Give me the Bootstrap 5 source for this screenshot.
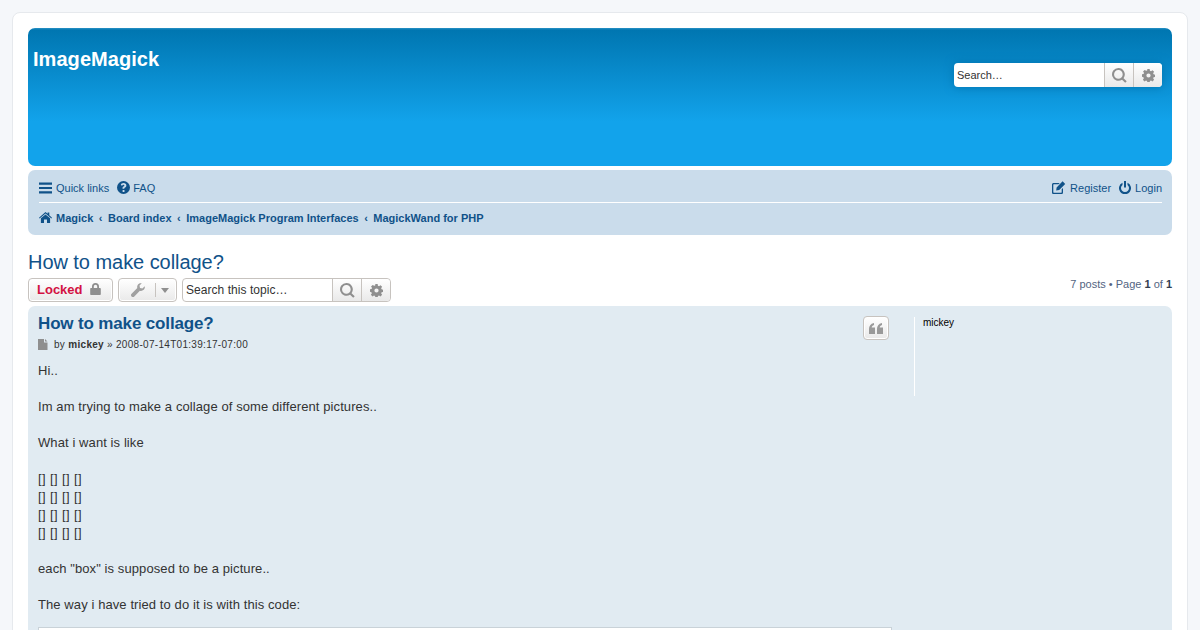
<!DOCTYPE html>
<html lang="en"><head><meta charset="utf-8"><title>How to make collage?</title>
<link href="https://cdn.jsdelivr.net/npm/bootstrap@5.3.0/dist/css/bootstrap.min.css" rel="stylesheet">
<style>
html,body{height:630px;overflow:hidden;background:#f5f7fa}
body{font-family:"Liberation Sans",Arial,sans-serif;font-size:11px;color:#536482;line-height:normal;padding:12px 12px 0}
svg{fill:currentColor;display:block;flex:none}
a{text-decoration:none;color:#105289}
.pg-wrap{background:#fff;border:1px solid #e6e9ed;border-radius:8px;padding:15px;height:700px}
.hdr-bar{height:138px;border-radius:7px;background:linear-gradient(to bottom,#2a93c6 0,#0076b1 2px,#12a3eb 68%,#12a3eb 100%);padding:5px;color:#fff}
.site-name{font-size:20px;font-weight:700;line-height:23px;margin-top:15px;letter-spacing:.05px}
.hdr-search{width:208px;height:24px;margin:30px 5px 0 0;background:#fff;border-radius:4px;box-shadow:0 0 10px #0075b0}
.hdr-search .sbox-input{flex:1;font-size:11px;color:#333;padding-left:3px;line-height:24px}
.sbox-btn{width:29px;display:flex;align-items:center;justify-content:center;color:#8f8f8f;background:linear-gradient(#fff,#e9e9e9);border-left:1px solid #c7c3bf}
.sbox-btn:last-child{border-radius:0 4px 4px 0}
.nav-panel{margin-top:4px;height:65px;background:#cadceb;border-radius:7px;padding:3px 10px;color:#105289}
.nav-row{height:29px;padding-top:0}
.nav-row+.nav-row{border-top:1px solid #fff;padding-top:0;height:30px}
.nav-item-x{display:flex;align-items:center;gap:4px;font-size:11px;line-height:14px}
.nav-lead{margin-left:1px}
.faq-link{gap:3px}
.crumb{font-weight:700}
.crumb-sep{color:#105289;font-weight:700;padding:0 5.5px;font-size:11px}
.topic-title{font-size:20px;line-height:24px;color:#105289;margin:15px 0 4px;font-weight:400;letter-spacing:-.05px}
.tb-btn{height:24px;border:1px solid #c7c3bf;border-radius:4px;background:linear-gradient(#fff,#e9e9e9);box-shadow:0 0 0 1px #fff inset;color:#8f8f8f;display:flex;align-items:center}
.locked{width:85px;padding-left:8px;gap:7px;color:#d31141;font-size:13px;font-weight:700;line-height:21px;padding-bottom:2px}
.locked svg{color:#8f8f8f}
.tools{width:59px;margin-left:5px;padding-left:12px}
.tools svg{color:#a0a0a0}
.tools i{display:block;width:1px;height:14px;background:#c7c3bf;margin:0 5px 0 10px}
.caret-x{width:0;height:0;border:4.5px solid transparent;border-top:5px solid #8f8f8f;border-bottom:0}
.topic-search{width:209px;height:24px;margin-left:5px;background:#fff;border:1px solid #c7c3bf;border-radius:4px}
.topic-search .sbox-input{flex:1;color:#333;font-size:12px;line-height:22px;padding-left:3px;letter-spacing:.05px}
.pager{color:#536482;font-size:11px;line-height:13px}
.pager b{color:#323d4f}
.post-box{margin-top:4px;background:#e1ebf2;border-radius:7px;height:400px;padding:6px 10px 5px;position:relative}
.post-main{width:854px;color:#333;position:relative}
.post-title{font-size:17px;line-height:24px;font-weight:700;color:#105289;margin:0;letter-spacing:-.15px}
.post-meta{font-size:10px;letter-spacing:.3px;color:#333;margin-top:1px;height:15px;gap:6px;line-height:13px}
.post-meta svg{color:#8f8f8f}
.post-text{font-size:13px;line-height:18px;margin-top:10px;color:#333;letter-spacing:.09px}
.box-row{letter-spacing:.38px}
.quote-btn{position:absolute;top:4px;right:3px;width:26px;height:24px;justify-content:center}
.quote-btn svg{color:#999}
.post-side{position:absolute;left:886px;top:11px;height:79px;border-left:1px solid #fff;padding-left:8px;font-size:10px;color:#000;line-height:11px}
.code-frame{height:40px;margin-top:13px;background:#fff;border:1px solid #c9d2d8}
</style></head><body>
<div class="pg-wrap">
 <div class="hdr-bar d-flex justify-content-between align-items-start">
  <div class="site-name">ImageMagick</div>
  <div class="hdr-search d-flex overflow-visible">
   <div class="sbox-input">Search…</div>
   <div class="sbox-btn"><svg width="15" height="15" viewBox="0 0 16 16"><path fill-rule="evenodd" d="M6.800 0a6.800 6.800 0 0 1 5.500 10.800l3.400 3.400-1.600 1.600-3.400-3.400A6.800 6.800 0 1 1 6.800 0zm0 2.200a4.600 4.600 0 1 0 0 9.200 4.600 4.600 0 0 0 0-9.200z"/></svg></div>
   <div class="sbox-btn"><svg width="13" height="13" viewBox="0 0 16 16"><path fill-rule="evenodd" d="M6.600 0h2.800l.4 2.100 1.300.6 1.800-1.200 2 2-1.200 1.800.6 1.300 2.100.4v2.800l-2.100.4-.6 1.300 1.200 1.800-2 2-1.800-1.200-1.300.6-.4 2.100H6.600l-.4-2.100-1.300-.6-1.800 1.200-2-2 1.200-1.800-.6-1.300L-.2 9.400V6.600l2.100-.4.6-1.300L1.300 3.100l2-2 1.800 1.200 1.300-.6zM8 5.400a2.600 2.600 0 1 0 0 5.200 2.600 2.600 0 0 0 0-5.200z"/></svg></div>
  </div>
 </div>
 <div class="nav-panel">
  <div class="nav-row d-flex justify-content-between align-items-center">
   <div class="d-flex gap-2 nav-lead">
    <a class="nav-item-x" href="#"><svg width="13" height="12" viewBox="0 0 13 12"><path d="M0 .5h13v2.200H0zM0 4.900h13v2.200H0zM0 9.300h13v2.200H0z"/></svg>Quick links</a>
    <a class="nav-item-x faq-link" href="#"><svg width="13" height="13" viewBox="0 0 16 16"><path fill-rule="evenodd" d="M8 0a8 8 0 1 1 0 16A8 8 0 0 1 8 0zM6.900 11.200v2.300h2.300v-2.300zM8.100 2.600c-1.900 0-3 .9-3.400 2.200l1.600.9c.3-.7.8-1.100 1.600-1.100.7 0 1.200.4 1.200.9 0 .6-.4.9-1.100 1.300-.9.5-1.200 1.100-1.200 2v.7h2.200v-.4c0-.4.2-.6.9-1 1-.6 1.600-1.300 1.600-2.600 0-1.800-1.500-2.900-3.400-2.900z"/></svg>FAQ</a>
   </div>
   <div class="d-flex gap-2">
    <a class="nav-item-x" href="#"><svg width="14" height="13" viewBox="0 0 14 13"><path d="M10.600.3l2.600 2.600-6 6-3 .5.4-3zM1.600 2h6.200L6.400 3.300H1.800c-.3 0-.5.2-.5.5v7.400c0 .3.2.5.5.5h7.400c.3 0 .5-.2.5-.5V8.300L11 7v4.400c0 .9-.7 1.600-1.600 1.600H1.600C.7 13 0 12.300 0 11.400V3.600C0 2.700.7 2 1.600 2z"/></svg>Register</a>
    <a class="nav-item-x" href="#"><svg width="12" height="13" viewBox="0 0 12 13"><path d="M5 0h2v6.500H5zM3.500 1.800v2.100a4 4 0 1 0 5 0V1.800a6 6 0 1 1-5 0z"/></svg>Login</a>
   </div>
  </div>
  <div class="nav-row d-flex align-items-center nav-lead">
   <a class="nav-item-x crumb" href="#"><svg width="13" height="11" viewBox="0 0 13 11"><path d="M6.500 0l2.100 1.800V.6h1.700v2.700l2.700 2.400-.6.700-5.900-5-5.900 5-.6-.7zM6.500 2.400l4.600 3.900V11H8V7.500H5V11H1.900V6.300z"/></svg>Magick</a>
   <span class="crumb-sep">‹</span><a class="crumb" href="#">Board index</a>
   <span class="crumb-sep">‹</span><a class="crumb" href="#">ImageMagick Program Interfaces</a>
   <span class="crumb-sep">‹</span><a class="crumb" href="#">MagickWand for PHP</a>
  </div>
 </div>
 <h2 class="topic-title">How to make collage?</h2>
 <div class="d-flex justify-content-between align-items-start">
  <div class="d-flex">
   <div class="tb-btn locked">Locked<svg width="11" height="12" viewBox="0 0 11 12"><path fill-rule="evenodd" d="M5.500 0A3.500 3.500 0 0 1 9 3.500V5h.800c.6 0 1 .4 1 1v5c0 .6-.4 1-1 1H1.200c-.6 0-1-.4-1-1V6c0-.6.4-1 1-1H2V3.500A3.500 3.500 0 0 1 5.500 0zm0 1.800A1.700 1.700 0 0 0 3.800 3.500V5h3.400V3.500a1.700 1.700 0 0 0-1.700-1.700z"/></svg></div>
   <div class="tb-btn tools"><svg width="14" height="14" viewBox="0 0 14 14"><path d="M13.700 3.200c.4 1.500-.1 3-1.300 3.900-1 .8-2.300 1-3.500.6L3.300 13.400a1.900 1.900 0 0 1-2.700-2.700l5.700-5.700C5.900 3.800 6.200 2.500 7 1.500 7.900.4 9.400-.1 10.800.3L8.500 2.600l.5 2.400 2.400.5z"/></svg><i></i><span class="caret-x"></span></div>
   <div class="topic-search d-flex">
    <div class="sbox-input">Search this topic…</div>
    <div class="sbox-btn"><svg width="15" height="15" viewBox="0 0 16 16"><path fill-rule="evenodd" d="M6.800 0a6.800 6.800 0 0 1 5.500 10.800l3.400 3.400-1.600 1.600-3.400-3.400A6.800 6.800 0 1 1 6.800 0zm0 2.200a4.600 4.600 0 1 0 0 9.200 4.600 4.600 0 0 0 0-9.200z"/></svg></div>
    <div class="sbox-btn"><svg width="13" height="13" viewBox="0 0 16 16"><path fill-rule="evenodd" d="M6.600 0h2.800l.4 2.100 1.300.6 1.800-1.200 2 2-1.200 1.800.6 1.300 2.100.4v2.800l-2.100.4-.6 1.300 1.200 1.800-2 2-1.800-1.200-1.300.6-.4 2.100H6.600l-.4-2.100-1.300-.6-1.800 1.200-2-2 1.200-1.800-.6-1.300L-.2 9.400V6.600l2.100-.4.6-1.300L1.300 3.100l2-2 1.800 1.200 1.300-.6zM8 5.400a2.600 2.600 0 1 0 0 5.200 2.600 2.600 0 0 0 0-5.200z"/></svg></div>
   </div>
  </div>
  <div class="pager">7 posts • Page <b>1</b> of <b>1</b></div>
 </div>
 <div class="post-box">
  <div class="post-main">
   <h3 class="post-title">How to make collage?</h3>
   <div class="post-meta d-flex align-items-center"><svg width="10" height="11" viewBox="0 0 10 11"><path d="M0 0h6v3.500h3.500V11H0zM7 0l2.500 2.500H7z"/></svg><span>by <b>mickey</b> » 2008-07-14T01:39:17-07:00</span></div>
   <div class="post-text">Hi..<br><br>Im am trying to make a collage of some different pictures..<br><br>What i want is like<br><br><span class="box-row">[] [] [] []<br>[] [] [] []<br>[] [] [] []<br>[] [] [] []</span><br><br>each "box" is supposed to be a picture..<br><br>The way i have tried to do it is with this code:</div>
   <div class="code-frame"></div>
   <div class="tb-btn quote-btn"><svg width="14" height="11" viewBox="0 0 14 11"><path d="M0 6c0-3 1.500-5.300 5-6v2C3.500 2.400 2.800 3.300 2.700 4.500H6V11H0zM8 6c0-3 1.500-5.300 5-6v2c-1.500.4-2.200 1.300-2.300 2.500H14V11H8z"/></svg></div>
  </div>
  <div class="post-side">mickey</div>
 </div>
</div>
<script src="https://cdn.jsdelivr.net/npm/bootstrap@5.3.0/dist/js/bootstrap.bundle.min.js"></script>
</body></html>
